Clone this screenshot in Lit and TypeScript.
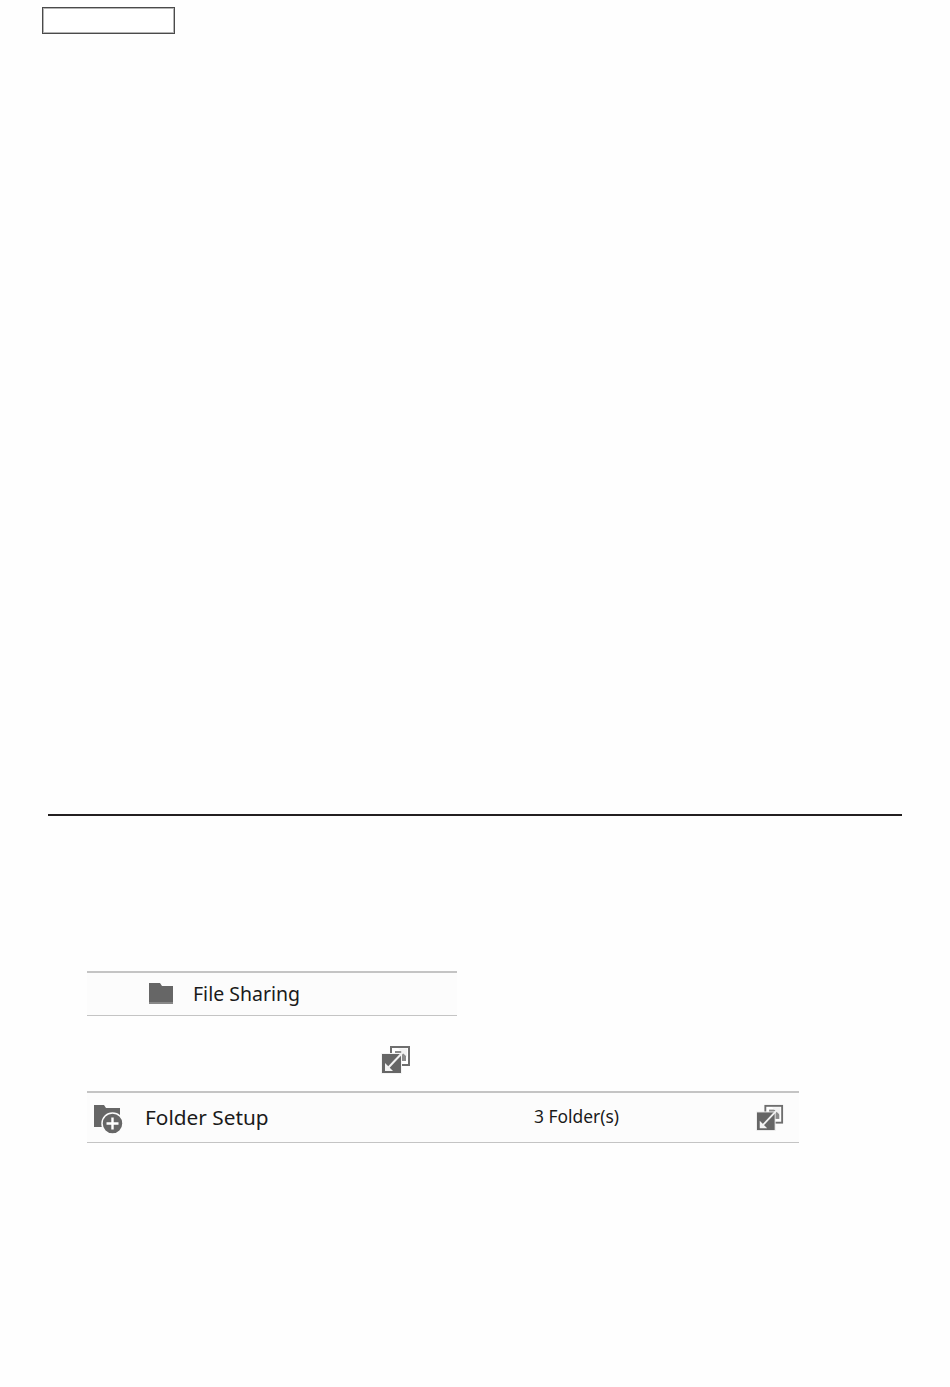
import { LitElement, html, css, svg } from "lit";
import { customElement } from "lit/decorators.js";

const expandIcon = svg`
  <rect x="10" y="2" width="18" height="18" fill="#fff" stroke="#6e6e6e" stroke-width="2" />
  <rect x="14" y="6" width="11" height="10" fill="#8c8c8c" />
  <rect x="0.5" y="8.5" width="20" height="20" fill="#666" stroke="#f4f4f4" stroke-width="1" />
  <path d="M7 23 L23 6" stroke="#f2f2f2" stroke-width="2" fill="none" />
  <path d="M4 18 L4 26 L12 26 Z M17 3.5 L26 3.5 L26 12 Z" fill="#f2f2f2" />
`;

@customElement("app-root")
export class AppRoot extends LitElement {
  static styles = css`
    :host {
      display: block;
      height: 1387px;
      background: #fefefe;
      font-family: "Noto Sans", "Liberation Sans", sans-serif;
      color: #1a1a1a;
    }

    .page {
      display: flex;
      flex-direction: column;
      padding: 7px 48px 0 42px;
    }

    .name-box {
      box-sizing: border-box;
      width: 133px;
      height: 27px;
      border: 1px solid #4a4a4a;
      box-shadow: inset 0 0 0 1px #b4b4b4;
      background: #fff;
    }

    .rule {
      height: 2px;
      margin: 780px 0 0 6px;
      background: #231f20;
    }

    .content {
      display: flex;
      flex-direction: column;
      margin: 155px 0 0 45px;
    }

    .row {
      box-sizing: border-box;
      display: flex;
      align-items: center;
      background: #fcfcfc;
      border-top: 2px solid #c4c4c4;
      border-bottom: 1px solid #c4c4c4;
    }

    .share-row {
      width: 370px;
      height: 45px;
      padding-left: 61px;
      font-size: 19.5px;
    }

    .share-row .label {
      padding-bottom: 2px;
    }

    .share-row .folder {
      width: 26px;
      height: 24px;
      margin-right: 19px;
    }

    .share-link {
      display: block;
      width: 30px;
      height: 30px;
      margin: 29px 0 0 294px;
    }

    .setup-row {
      width: 712px;
      height: 52px;
      margin-top: 16px;
      padding-left: 6px;
      font-size: 20.8px;
    }

    .setup-row .folder-add {
      width: 32px;
      height: 32px;
      margin-right: 20px;
    }

    .setup-row .title {
      width: 389px;
      padding-bottom: 2px;
    }

    .count {
      width: 222px;
      padding-bottom: 4px;
      font-size: 17.4px;
    }

    .setup-row .expand {
      width: 28px;
      height: 28px;
    }
  `;

  render() {
    return html`
      <div class="page">
        <div class="name-box"></div>
        <div class="rule"></div>
        <div class="content">
          <div class="row share-row">
            <svg class="folder" viewBox="0 0 26 24">
              <path d="M1 1 H12 L14 4 H25 V22 H1 Z" fill="#666" />
              <rect x="1" y="20" width="24" height="2" fill="#888" />
            </svg>
            <span class="label">File Sharing</span>
          </div>
          <svg class="share-link" viewBox="0 0 30 30">${expandIcon}</svg>
          <div class="row setup-row">
            <svg class="folder-add" viewBox="0 0 32 32">
              <path d="M1 3 H11 L13 6 H27 V14 H14 V25 H1 Z" fill="#666" />
              <circle cx="19.5" cy="21.5" r="10.5" fill="#666" stroke="#fcfcfc" stroke-width="1.5" />
              <path d="M19.5 15.5 V27.5 M13.5 21.5 H25.5" stroke="#fff" stroke-width="2.4" />
            </svg>
            <span class="title">Folder Setup</span>
            <span class="count">3 Folder(s)</span>
            <svg class="expand" viewBox="0 0 30 30">${expandIcon}</svg>
          </div>
        </div>
      </div>
    `;
  }
}
